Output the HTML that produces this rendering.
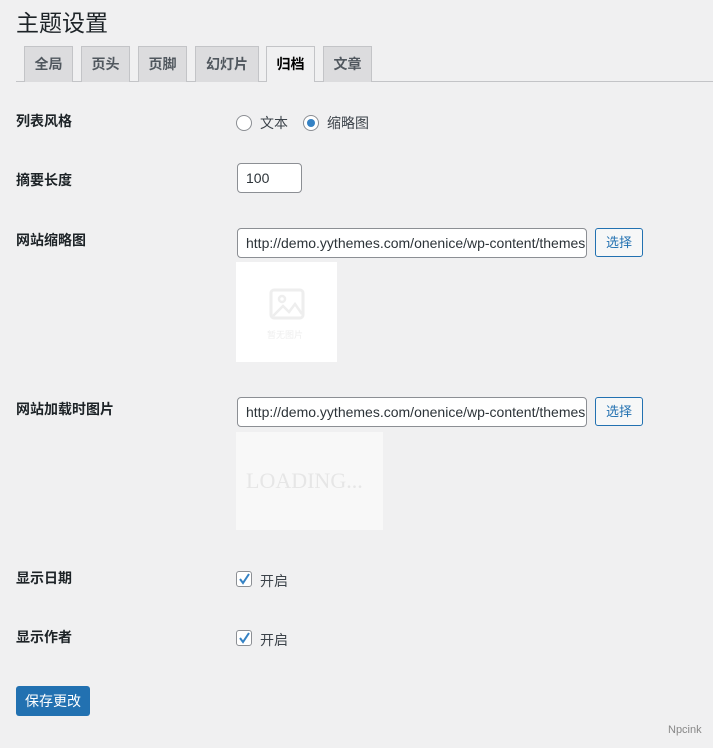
<!DOCTYPE html>
<html><head><meta charset="utf-8"><style>
*{box-sizing:border-box;margin:0;padding:0}
body{width:713px;height:748px;background:#f0f0f1;font-family:"Liberation Sans","Noto Sans CJK SC",sans-serif;color:#1d2327;font-size:13px;position:relative;overflow:hidden}
.a{position:absolute}
h1{position:absolute;left:16px;top:4px;font-size:23px;font-weight:400;color:#1d2327}
.tab{position:absolute;top:46px;height:36px;background:#dcdcde;border:1px solid #c3c4c7;border-bottom:none;font-size:14px;font-weight:600;color:#50575e;text-align:center;line-height:34px}
.tab.on{background:#f0f0f1;color:#000;height:36px}
.line{position:absolute;left:16px;right:0;top:81px;height:1px;background:#c3c4c7}
.lbl{position:absolute;left:16px;font-size:14px;font-weight:600;color:#1d2327}
.inp{position:absolute;left:237px;height:30px;background:#fff;border:1px solid #8c8f94;border-radius:4px;font-size:14px;color:#2c3338;padding:0 8px;line-height:28px;white-space:nowrap;overflow:hidden}
.btn{position:absolute;left:595px;width:48px;height:29px;border:1px solid #2271b1;border-radius:3px;background:#f6f7f7;color:#2271b1;font-size:13px;text-align:center;line-height:27px}
.rad{position:absolute;width:16px;height:16px;border:1px solid #8c8f94;border-radius:50%;background:#fff}
.cb{position:absolute;left:236px;width:16px;height:16px;border:1px solid #8c8f94;border-radius:3px;background:#fff}
.t{position:absolute;font-size:14px;color:#3c434a}
</style></head><body>
<h1>主题设置</h1>
<div class="line"></div>
<div class="tab" style="left:24px;width:49px">全局</div>
<div class="tab" style="left:81px;width:49px">页头</div>
<div class="tab" style="left:138px;width:49px">页脚</div>
<div class="tab" style="left:195px;width:64px">幻灯片</div>
<div class="tab on" style="left:266px;width:49px">归档</div>
<div class="tab" style="left:323px;width:49px">文章</div>

<div class="lbl" style="top:111px">列表风格</div>
<div class="rad" style="left:236px;top:115px"></div>
<div class="t" style="left:260px;top:113px">文本</div>
<div class="rad" style="left:303px;top:115px"><div class="a" style="left:3px;top:3px;width:8px;height:8px;border-radius:50%;background:#3582c4"></div></div>
<div class="t" style="left:327px;top:113px">缩略图</div>

<div class="lbl" style="top:170px">摘要长度</div>
<div class="inp" style="top:163px;width:65px">100</div>

<div class="lbl" style="top:230px">网站缩略图</div>
<div class="inp" style="top:228px;width:350px">http://demo.yythemes.com/onenice/wp-content/themes</div>
<div class="btn" style="top:228px">选择</div>
<div class="a" style="left:236px;top:262px;width:101px;height:100px;background:#fff">
<svg class="a" style="left:33px;top:26px" width="36" height="32"><rect x="2" y="2" width="32" height="28" rx="3" fill="none" stroke="#eee" stroke-width="3"/><circle cx="13" cy="11" r="3" fill="none" stroke="#eee" stroke-width="2.5"/><path d="M4 28 L14 18 L20 24 L26 16 L33 26" fill="none" stroke="#eee" stroke-width="2.5"/></svg>
<div class="a" style="left:31px;top:66px;font-size:9px;color:#eee">暂无图片</div>
</div>

<div class="lbl" style="top:399px">网站加载时图片</div>
<div class="inp" style="top:397px;width:350px">http://demo.yythemes.com/onenice/wp-content/themes</div>
<div class="btn" style="top:397px">选择</div>
<div class="a" style="left:236px;top:432px;width:147px;height:98px;background:#f8f8f8">
<div class="a" style="left:10px;top:36px;font-family:'Liberation Serif',serif;font-size:22px;color:#e6e6e6">LOADING...</div>
</div>

<div class="lbl" style="top:568px">显示日期</div>
<div class="cb" style="top:571px"><svg width="14" height="14" class="a" style="left:0;top:0"><path d="M3 7 L6 11 L12 2" fill="none" stroke="#3582c4" stroke-width="2"/></svg></div>
<div class="t" style="left:260px;top:571px">开启</div>

<div class="lbl" style="top:627px">显示作者</div>
<div class="cb" style="top:630px"><svg width="14" height="14" class="a" style="left:0;top:0"><path d="M3 7 L6 11 L12 2" fill="none" stroke="#3582c4" stroke-width="2"/></svg></div>
<div class="t" style="left:260px;top:630px">开启</div>

<div class="a" style="left:16px;top:686px;width:74px;height:30px;background:#2271b1;border-radius:3px;color:#fff;font-size:14px;text-align:center;line-height:30px">保存更改</div>
<div class="a" style="left:668px;top:724px;font-size:11px;color:#888">Npcink</div>
</body></html>
